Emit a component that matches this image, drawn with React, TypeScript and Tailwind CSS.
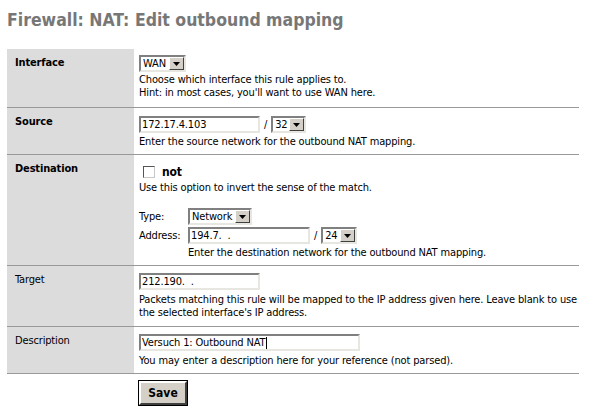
import type { ReactNode } from "react";

const FONT = "font-['DejaVu_Sans_Condensed','DejaVu_Sans',sans-serif]";

function DropArrow() {
  return (
    <span className="flex h-full w-[15px] shrink-0 items-center justify-center border border-t-white border-l-white border-b-[#404040] border-r-[#404040] bg-[#d4d0c8]">
      <svg width="7" height="4" viewBox="0 0 7 4">
        <path d="M0 0h7L3.5 4z" fill="#000" />
      </svg>
    </span>
  );
}

function Select({ value, width }: { value: string; width: number }) {
  return (
    <span
      className="inline-flex h-[17px] items-stretch border-2 border-t-[#808080] border-l-[#808080] border-b-[#e8e6e0] border-r-[#e8e6e0] bg-white"
      style={{ width }}
    >
      <span className="flex-1 pl-[2px] text-[11px] leading-[13px]">{value}</span>
      <DropArrow />
    </span>
  );
}

function TextBox({ value, width, caret }: { value: string; width: number; caret?: boolean }) {
  return (
    <span
      className="inline-flex h-[17px] items-center border-2 border-t-[#808080] border-l-[#808080] border-b-[#e8e6e0] border-r-[#e8e6e0] bg-white pl-[1px] text-[11px] leading-[13px] whitespace-pre"
      style={{ width }}
    >
      {value}
      {caret && <span className="ml-[1px] inline-block h-[12px] w-px bg-black" />}
    </span>
  );
}

function Row({ label, bold, children, className }: { label: string; bold?: boolean; children: ReactNode; className: string }) {
  return (
    <>
      <div className={`border-b border-[#999999] bg-[#dcdcdc] pl-[8px] pt-[7px] text-[11px] leading-[13px] ${bold ? "font-bold" : ""}`}>
        {label}
      </div>
      <div className={`border-b border-[#999999] pl-[5px] text-[11px] leading-[13px] ${className}`}>{children}</div>
    </>
  );
}

export default function App() {
  return (
    <div className={`min-h-[409px] bg-white pl-[7px] pt-[9px] text-black ${FONT}`}>
      <h1 className="text-[17.5px] font-bold leading-[22px] text-[#777777]">Firewall: NAT: Edit outbound mapping</h1>

      <div className="mt-[18px] grid w-[572px] grid-cols-[127px_445px] tracking-[-0.15px]">
        <Row label="Interface" bold className="pt-[6px] pb-[8px]">
          <Select value="WAN" width={47} />
          <div className="mt-[1px]">
            Choose which interface this rule applies to.
            <br />
            Hint: in most cases, you'll want to use WAN here.
          </div>
        </Row>

        <Row label="Source" bold className="pt-[8px] pb-[6px]">
          <div className="flex items-center">
            <TextBox value="172.17.4.103" width={121} />
            <span className="mx-[4px] text-[11px]">/</span>
            <Select value="32" width={35} />
          </div>
          <div className="mt-[2px]">Enter the source network for the outbound NAT mapping.</div>
        </Row>

        <Row label="Destination" bold className="pt-[8px] pb-[6px]">
          <div className="flex h-[18px] items-center">
            <span className="ml-[4px] inline-block h-[12px] w-[12px] border border-t-[#555555] border-l-[#555555] border-b-[#c8c8c8] border-r-[#c8c8c8] bg-white" />
            <span className="ml-[7px] text-[12px] font-bold">not</span>
          </div>
          <div>Use this option to invert the sense of the match.</div>
          <div className="mt-[14px] grid grid-cols-[49px_auto] items-center gap-y-[2px]">
            <span>Type:</span>
            <span className="flex">
              <Select value="Network" width={64} />
            </span>
            <span>Address:</span>
            <span className="flex items-center">
              <TextBox value="194.7.  ." width={122} />
              <span className="mx-[4px]">/</span>
              <Select value="24" width={36} />
            </span>
            <span />
            <span>Enter the destination network for the outbound NAT mapping.</span>
          </div>
        </Row>

        <Row label="Target" className="pt-[7px] pb-[7px]">
          <TextBox value="212.190.  ." width={121} />
          <div className="mt-[3px]">
            Packets matching this rule will be mapped to the IP address given here. Leave blank to use the selected
            interface's IP address.
          </div>
        </Row>

        <Row label="Description" className="pt-[7px] pb-[6px]">
          <TextBox value="Versuch 1: Outbound NAT" width={221} caret />
          <div className="mt-[3px]">You may enter a description here for your reference (not parsed).</div>
        </Row>

        <div />
        <div className="pl-[5px] pt-[6px]">
          <button className="h-[24px] w-[48px] border-2 border-t-white border-l-white border-b-[#404040] border-r-[#404040] bg-[#d4d0c8] text-[12px] font-bold leading-none tracking-normal outline outline-1 outline-[#000]">
            Save
          </button>
        </div>
      </div>
    </div>
  );
}
